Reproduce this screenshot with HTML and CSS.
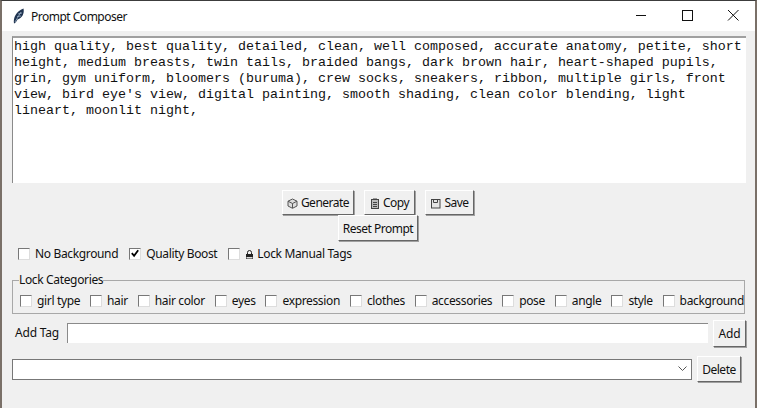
FILE: index.html
```html
<!DOCTYPE html>
<html lang="en">
  <head>
    <meta charset="UTF-8" />
    <meta name="viewport" content="width=device-width, initial-scale=1.0" />
    <title>Prompt Composer</title>
    <link rel="stylesheet" href="styles.css">
  </head>
  <body>
    <div id="window">
      <div id="titlebar">
        <svg class="feather" width="12" height="16" viewBox="0 0 12 16">
          <path d="M1 15.500C0 10 3 3 10.500 0.500C11.500 5 9.500 10 4.500 11.500C3.500 13.500 2.500 15 1 15.500Z" fill="#1f3350"/>
          <path d="M2 14L8 4M4 8.500L8 8M5 6L9 5" stroke="#a9bdd3" stroke-width="0.7"/>
        </svg>
        <span class="title">Prompt Composer</span>
        <div class="controls">
          <svg width="46" height="30" viewBox="0 0 46 30"><path d="M18 14.500H28" stroke="#111"/></svg>
          <svg width="46" height="30" viewBox="0 0 46 30"><rect x="18.500" y="9.500" width="10" height="10" fill="none" stroke="#111"/></svg>
          <svg width="46" height="30" viewBox="0 0 46 30"><path d="M18 9L28.500 19.500M28.500 9L18 19.500" stroke="#111"/></svg>
        </div>
      </div>

      <div id="content">
        <div id="prompt">high quality, best quality, detailed, clean, well composed, accurate anatomy, petite, short
height, medium breasts, twin tails, braided bangs, dark brown hair, heart-shaped pupils,
grin, gym uniform, bloomers (buruma), crew socks, sneakers, ribbon, multiple girls, front
view, bird eye's view, digital painting, smooth shading, clean color blending, light
lineart, moonlit night,</div>

        <div class="actions">
          <button class="btn btn-generate">
            <svg class="icon" width="11" height="11" viewBox="0 0 11 11">
              <path d="M5.500 1L10 3.200V8L5.500 10.300L1 8V3.200Z" fill="#ddd" stroke="#555"/>
              <path d="M1 3.200L5.500 5.500L10 3.200M5.500 5.500V10" fill="none" stroke="#555"/>
            </svg>Generate
          </button>
          <button class="btn btn-copy">
            <svg class="icon" width="10" height="11" viewBox="0 0 10 11">
              <rect x="1.500" y="1.500" width="7" height="9" fill="#bbb" stroke="#444"/>
              <path d="M3 1H7M3 4.500H7M3 6.500H7M3 8.500H7" stroke="#444"/>
            </svg>Copy
          </button>
          <button class="btn btn-save">
            <svg class="icon" width="11" height="11" viewBox="0 0 11 11">
              <rect x="1.500" y="1.500" width="8.500" height="8.500" fill="#e4e4e4" stroke="#444"/>
              <path d="M3.500 2V4.500H7.500V2" fill="none" stroke="#444"/>
            </svg>Save
          </button>
        </div>
        <button class="btn btn-reset">Reset Prompt</button>

        <div class="options">
          <label class="check"><span class="box"></span>No Background</label>
          <label class="check"><span class="box checked">
            <svg width="11" height="11" viewBox="0 0 11 11"><path d="M2 5L4.500 8L9 2" fill="none" stroke="#000" stroke-width="2"/></svg>
          </span>Quality Boost</label>
          <label class="check check-lock"><span class="box"></span>
            <svg class="lock" width="9" height="11" viewBox="0 0 9 11">
              <path d="M2.500 5V3.500A2 2 0 0 1 6.500 3.500V5" fill="none" stroke="#222"/>
              <rect x="1" y="5" width="7" height="5" fill="#222"/>
              <rect x="1.500" y="8" width="6" height="1.500" fill="#ddd"/>
            </svg>Lock Manual Tags</label>
        </div>

        <fieldset class="categories">
          <legend>Lock Categories</legend>
          <label class="check"><span class="box"></span>girl type</label>
          <label class="check"><span class="box"></span>hair</label>
          <label class="check"><span class="box"></span>hair color</label>
          <label class="check"><span class="box"></span>eyes</label>
          <label class="check"><span class="box"></span>expression</label>
          <label class="check"><span class="box"></span>clothes</label>
          <label class="check"><span class="box"></span>accessories</label>
          <label class="check"><span class="box"></span>pose</label>
          <label class="check"><span class="box"></span>angle</label>
          <label class="check"><span class="box"></span>style</label>
          <label class="check"><span class="box"></span>background</label>
        </fieldset>

        <div class="add-row">
          <span class="add-label">Add Tag</span>
          <div class="entry"></div>
          <button class="btn btn-add">Add</button>
        </div>

        <div class="delete-row">
          <div class="combo">
            <svg width="9" height="6" viewBox="0 0 9 6"><path d="M0.500 0.500L4.500 4.500L8.500 0.500" fill="none" stroke="#555"/></svg>
          </div>
          <button class="btn btn-delete">Delete</button>
        </div>
      </div>
    </div>
  </body>
</html>
```

FILE: styles.css
```css
* {
  margin: 0;
  padding: 0;
  box-sizing: border-box;
}
html,
body {
  width: 757px;
  height: 408px;
  overflow: hidden;
}
body {
  font-family: "Noto Sans", "Open Sans", sans-serif;
  font-size: 12px;
  color: #111;
}
#window {
  width: 757px;
  height: 408px;
  background-color: #f0f0f0;
  border-top: 1px solid #3c3c3c;
  border-left: 2px solid #7a7068;
  border-right: 2px solid #7a7068;
  display: flex;
  flex-direction: column;
}
#titlebar {
  height: 30px;
  flex-shrink: 0;
  background-color: #fff;
  display: flex;
  align-items: center;
  padding-left: 11px;
}
.feather {
  margin-right: 6px;
}
.title {
  flex: 1;
  letter-spacing: -0.5px;
}
.controls {
  display: flex;
  margin-right: -1px;
}
#content {
  flex: 1;
  padding: 5px 9px 0 10px;
  display: flex;
  flex-direction: column;
}
#prompt {
  height: 147px;
  background-color: #fff;
  border-top: 2px solid #a0a0a0;
  border-left: 1px solid #8a8a8a;
  padding: 1px 0 0 1px;
  font-family: "Liberation Mono", monospace;
  font-size: 13.33px;
  line-height: 16px;
  white-space: pre;
  overflow: hidden;
}
.actions {
  display: flex;
  justify-content: flex-start;
  gap: 10px;
  margin: 7px 0 0 270px;
}
.btn {
  height: 25px;
  font: inherit;
  letter-spacing: -0.5px;
  color: #111;
  background-color: #f0f0f0;
  border: 1px solid;
  border-color: #fff #666 #666 #fff;
  box-shadow: 1px 1px 0 #a0a0a0;
  display: flex;
  align-items: center;
  justify-content: center;
}
.btn-generate {
  width: 72px;
}
.btn-copy {
  width: 51px;
}
.btn-save {
  width: 49px;
}
.btn-reset {
  width: 80px;
  height: 26px;
  margin: 0 0 0 326px;
}
.icon {
  margin-right: 3px;
  margin-top: 2px;
}
.options {
  display: flex;
  gap: 11px;
  margin: 6px 0 0 6px;
  height: 13px;
  align-items: center;
}
.check {
  display: flex;
  align-items: center;
  white-space: nowrap;
  letter-spacing: -0.35px;
}
.box {
  width: 12px;
  height: 12px;
  margin-right: 5px;
  background-color: #fff;
  border: 1px solid;
  border-color: #777 #ddd #ddd #777;
  display: flex;
  align-items: center;
  justify-content: center;
  flex-shrink: 0;
}
.box.checked svg {
  display: block;
}
.lock {
  margin-right: 3px;
  margin-top: 2px;
}
.categories {
  margin-top: 13px;
  width: 733px;
  height: 41px;
  border: 1px solid #a8a8a8;
  padding: 5px 0 0 7px;
  display: flex;
  justify-content: space-between;
  align-items: center;
}
.categories legend {
  margin-left: -1px;
  letter-spacing: -0.35px;
  line-height: 14px;
}
.add-row {
  display: flex;
  align-items: center;
  margin-top: 6px;
  padding-left: 3px;
}
.add-label {
  width: 52px;
  margin-bottom: 2px;
  letter-spacing: -0.2px;
}
.entry {
  width: 641px;
  height: 20px;
  margin-bottom: 2px;
  background-color: #fff;
  border-top: 1px solid #8a8a8a;
  border-left: 1px solid #8a8a8a;
}
.btn-add {
  width: 33px;
  height: 27px;
  margin-left: 5px;
  letter-spacing: -0.2px;
}
.delete-row {
  display: flex;
  align-items: center;
  margin-top: 9px;
}
.combo {
  width: 680px;
  height: 21px;
  background-color: #fff;
  border: 1px solid #777;
  display: flex;
  align-items: center;
  justify-content: flex-end;
  padding-right: 4px;
}
.btn-delete {
  width: 44px;
  height: 26px;
  margin-left: 5px;
}
```
